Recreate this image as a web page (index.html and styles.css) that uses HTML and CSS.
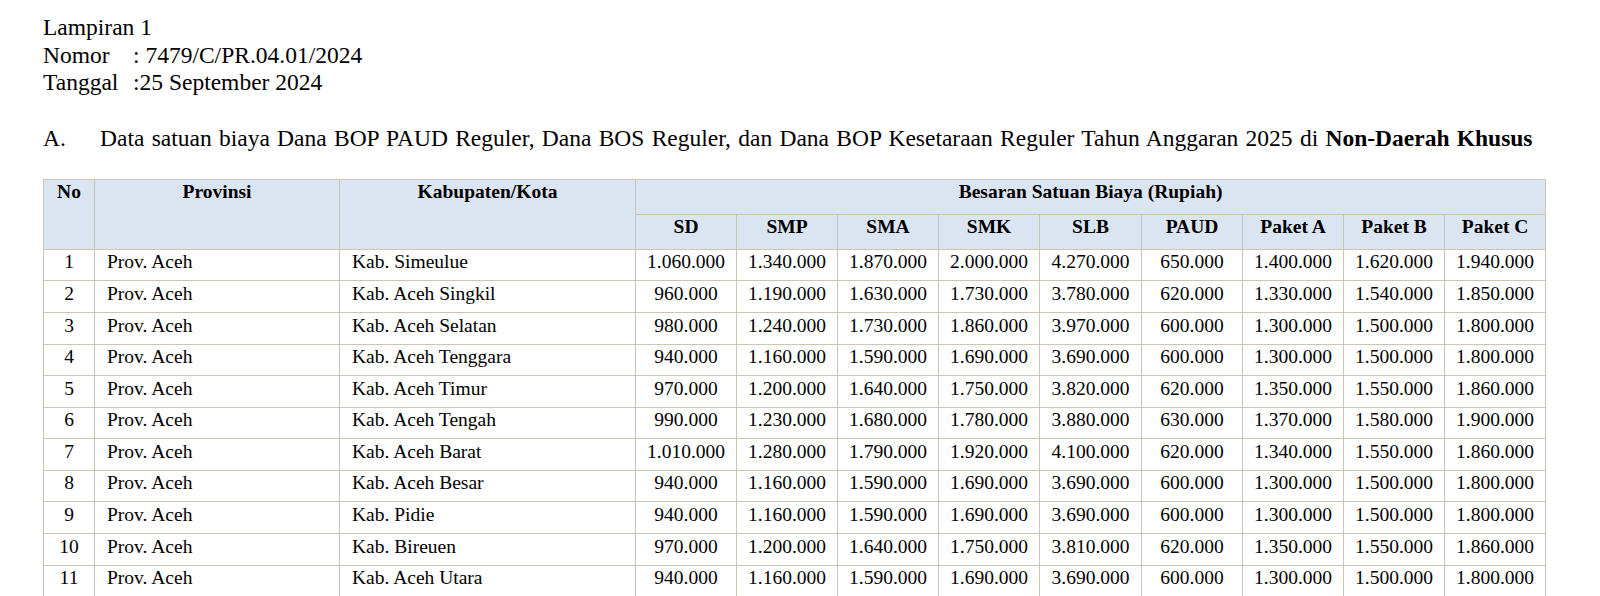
FILE: index.html
```html
<!DOCTYPE html>
<html lang="id">
<head>
<meta charset="utf-8">
<title>Lampiran 1</title>
<link rel="stylesheet" href="styles.css">
</head>
<body>
<div class="page">
  <div class="meta">
    <div class="line">Lampiran 1</div>
    <div class="line"><span class="label">Nomor</span>: 7479/C/PR.04.01/2024</div>
    <div class="line"><span class="label">Tanggal</span>:25 September 2024</div>
  </div>
  <div class="title"><span class="num">A.</span>Data satuan biaya Dana BOP PAUD Reguler, Dana BOS Reguler, dan Dana BOP Kesetaraan Reguler Tahun Anggaran 2025 di <b>Non-Daerah Khusus</b></div>
  <table class="data">
    <colgroup>
      <col class="c-no"><col class="c-prov"><col class="c-kab">
      <col class="c-n"><col class="c-n"><col class="c-n"><col class="c-n"><col class="c-slb">
      <col class="c-n"><col class="c-n"><col class="c-n"><col class="c-n">
    </colgroup>
    <thead>
      <tr class="h1">
        <th rowspan="2">No</th>
        <th rowspan="2">Provinsi</th>
        <th rowspan="2">Kabupaten/Kota</th>
        <th colspan="9">Besaran Satuan Biaya (Rupiah)</th>
      </tr>
      <tr class="h2">
        <th>SD</th><th>SMP</th><th>SMA</th><th>SMK</th><th>SLB</th><th>PAUD</th><th>Paket A</th><th>Paket B</th><th>Paket C</th>
      </tr>
    </thead>
    <tbody>
      <tr><td class="no">1</td><td class="txt">Prov. Aceh</td><td class="txt">Kab. Simeulue</td><td>1.060.000</td><td>1.340.000</td><td>1.870.000</td><td>2.000.000</td><td>4.270.000</td><td>650.000</td><td>1.400.000</td><td>1.620.000</td><td>1.940.000</td></tr>
      <tr><td class="no">2</td><td class="txt">Prov. Aceh</td><td class="txt">Kab. Aceh Singkil</td><td>960.000</td><td>1.190.000</td><td>1.630.000</td><td>1.730.000</td><td>3.780.000</td><td>620.000</td><td>1.330.000</td><td>1.540.000</td><td>1.850.000</td></tr>
      <tr><td class="no">3</td><td class="txt">Prov. Aceh</td><td class="txt">Kab. Aceh Selatan</td><td>980.000</td><td>1.240.000</td><td>1.730.000</td><td>1.860.000</td><td>3.970.000</td><td>600.000</td><td>1.300.000</td><td>1.500.000</td><td>1.800.000</td></tr>
      <tr><td class="no">4</td><td class="txt">Prov. Aceh</td><td class="txt">Kab. Aceh Tenggara</td><td>940.000</td><td>1.160.000</td><td>1.590.000</td><td>1.690.000</td><td>3.690.000</td><td>600.000</td><td>1.300.000</td><td>1.500.000</td><td>1.800.000</td></tr>
      <tr><td class="no">5</td><td class="txt">Prov. Aceh</td><td class="txt">Kab. Aceh Timur</td><td>970.000</td><td>1.200.000</td><td>1.640.000</td><td>1.750.000</td><td>3.820.000</td><td>620.000</td><td>1.350.000</td><td>1.550.000</td><td>1.860.000</td></tr>
      <tr><td class="no">6</td><td class="txt">Prov. Aceh</td><td class="txt">Kab. Aceh Tengah</td><td>990.000</td><td>1.230.000</td><td>1.680.000</td><td>1.780.000</td><td>3.880.000</td><td>630.000</td><td>1.370.000</td><td>1.580.000</td><td>1.900.000</td></tr>
      <tr><td class="no">7</td><td class="txt">Prov. Aceh</td><td class="txt">Kab. Aceh Barat</td><td>1.010.000</td><td>1.280.000</td><td>1.790.000</td><td>1.920.000</td><td>4.100.000</td><td>620.000</td><td>1.340.000</td><td>1.550.000</td><td>1.860.000</td></tr>
      <tr><td class="no">8</td><td class="txt">Prov. Aceh</td><td class="txt">Kab. Aceh Besar</td><td>940.000</td><td>1.160.000</td><td>1.590.000</td><td>1.690.000</td><td>3.690.000</td><td>600.000</td><td>1.300.000</td><td>1.500.000</td><td>1.800.000</td></tr>
      <tr><td class="no">9</td><td class="txt">Prov. Aceh</td><td class="txt">Kab. Pidie</td><td>940.000</td><td>1.160.000</td><td>1.590.000</td><td>1.690.000</td><td>3.690.000</td><td>600.000</td><td>1.300.000</td><td>1.500.000</td><td>1.800.000</td></tr>
      <tr><td class="no">10</td><td class="txt">Prov. Aceh</td><td class="txt">Kab. Bireuen</td><td>970.000</td><td>1.200.000</td><td>1.640.000</td><td>1.750.000</td><td>3.810.000</td><td>620.000</td><td>1.350.000</td><td>1.550.000</td><td>1.860.000</td></tr>
      <tr><td class="no">11</td><td class="txt">Prov. Aceh</td><td class="txt">Kab. Aceh Utara</td><td>940.000</td><td>1.160.000</td><td>1.590.000</td><td>1.690.000</td><td>3.690.000</td><td>600.000</td><td>1.300.000</td><td>1.500.000</td><td>1.800.000</td></tr>
    </tbody>
  </table>
</div>
</body>
</html>
```

FILE: styles.css
```css
html, body {
  margin: 0;
  padding: 0;
  background: #ffffff;
}
body {
  font-family: "Liberation Serif", "Times New Roman", serif;
  color: #000000;
  overflow: hidden;
}
.page {
  padding: 14.3px 0 0 43px;
}
.meta .line {
  font-size: 23.5px;
  line-height: 27.5px;
  white-space: nowrap;
}
.meta .label {
  display: inline-block;
  width: 90px;
}
.title {
  margin-top: 28.5px;
  font-size: 23.5px;
  line-height: 27.5px;
  word-spacing: 1.4px;
  white-space: nowrap;
}
.title .num {
  display: inline-block;
  width: 57px;
}
.data {
  margin-top: 26px;
  border-collapse: collapse;
  table-layout: fixed;
  width: 1503px;
  font-size: 19.5px;
}
.c-no { width: 51px; }
.c-prov { width: 245px; }
.c-kab { width: 296px; }
.c-n { width: 101px; }
.c-slb { width: 102px; }
.data th,
.data td {
  border: 1px solid #cac6b2;
  white-space: nowrap;
  overflow: hidden;
}
.data th {
  background: #dbe5f1;
  font-weight: bold;
  text-align: center;
  line-height: 22px;
  height: 33px;
  padding: 1px 2px 0;
  vertical-align: top;
}
.data td {
  line-height: 21.6px;
  padding: 1.6px 2px 7.4px;
  text-align: center;
  vertical-align: top;
}
.data td.txt {
  text-align: left;
  padding-left: 12px;
}
```
